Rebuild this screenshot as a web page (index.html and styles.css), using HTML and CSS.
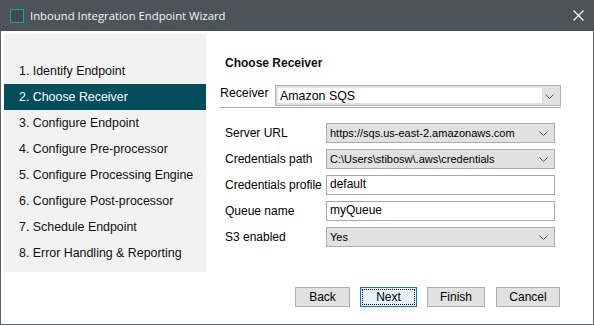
FILE: index.html
```html
<!DOCTYPE html>
<html>
<head>
<meta charset="utf-8">
<link rel="stylesheet" href="styles.css">
<title>Inbound Integration Endpoint Wizard</title>
</head>
<body>
<div class="window">
  <div class="titlebar">
    <span class="app-icon"></span>
    <span class="title">Inbound Integration Endpoint Wizard</span>
    <svg class="close" width="11" height="11" viewBox="0 0 11 11"><path d="M0.5 0.5 L10.5 10.5 M10.5 0.5 L0.5 10.5" stroke="#ffffff" stroke-width="1.2" fill="none"/></svg>
  </div>
  <div class="body">
    <ul class="steps">
      <li>1. Identify Endpoint</li>
      <li class="active">2. Choose Receiver</li>
      <li>3. Configure Endpoint</li>
      <li>4. Configure Pre-processor</li>
      <li>5. Configure Processing Engine</li>
      <li>6. Configure Post-processor</li>
      <li>7. Schedule Endpoint</li>
      <li>8. Error Handling &amp; Reporting</li>
    </ul>
    <div class="main">
      <div class="heading">Choose Receiver</div>
      <div class="receiver-row">
        <span class="receiver-label">Receiver</span>
        <div class="combo edit">
          <span class="field">Amazon SQS</span>
          <svg class="chev" width="9" height="5" viewBox="0 0 9 5"><path d="M0.5 0.5 L4.5 4.5 L8.5 0.5" stroke="#555" stroke-width="1" fill="none"/></svg>
        </div>
      </div>
      <div class="form">
        <div class="row"><span class="label">Server URL</span>
          <div class="combo"><span class="value">https://sqs.us-east-2.amazonaws.com</span>
          <svg class="chev" width="9" height="5" viewBox="0 0 9 5"><path d="M0.5 0.5 L4.5 4.5 L8.5 0.5" stroke="#555" stroke-width="1" fill="none"/></svg></div></div>
        <div class="row"><span class="label">Credentials path</span>
          <div class="combo"><span class="value">C:\Users\stibosw\.aws\credentials</span>
          <svg class="chev" width="9" height="5" viewBox="0 0 9 5"><path d="M0.5 0.5 L4.5 4.5 L8.5 0.5" stroke="#555" stroke-width="1" fill="none"/></svg></div></div>
        <div class="row"><span class="label">Credentials profile</span>
          <div class="text">default</div></div>
        <div class="row"><span class="label">Queue name</span>
          <div class="text">myQueue</div></div>
        <div class="row"><span class="label">S3 enabled</span>
          <div class="combo"><span class="value">Yes</span>
          <svg class="chev" width="9" height="5" viewBox="0 0 9 5"><path d="M0.5 0.5 L4.5 4.5 L8.5 0.5" stroke="#555" stroke-width="1" fill="none"/></svg></div></div>
      </div>
      <div class="buttons">
        <button class="btn b-back">Back</button>
        <button class="btn b-next focus"><span class="focus-ring">Next</span></button>
        <button class="btn b-finish">Finish</button>
        <button class="btn b-cancel">Cancel</button>
      </div>
    </div>
  </div>
</div>
</body>
</html>
```
FILE: styles.css
```css
* { box-sizing: border-box; }
html, body { margin: 0; padding: 0; }
body {
  width: 594px;
  height: 325px;
  overflow: hidden;
  font-family: "Liberation Sans", Arial, sans-serif;
  font-size: 12px;
  color: #000;
  background: #fff;
}
.window {
  width: 594px;
  height: 325px;
  border: 1px solid #5a6268;
  border-top: none;
  display: flex;
  flex-direction: column;
  background: #fff;
}
.titlebar {
  height: 31px;
  margin: 0 -1px;
  background: #4c545a;
  display: flex;
  align-items: center;
  padding-left: 10px;
  padding-right: 10px;
  color: #fff;
  flex-shrink: 0;
}
.app-icon {
  width: 14px;
  height: 14px;
  border: 1px solid #16a3b3;
  background: #3e4a50;
  margin-right: 6px;
}
.title {
  font-family: "Open Sans", "Noto Sans", sans-serif;
  font-size: 11.3px;
  color: #f4f6f7;
  flex: 1;
}
.close { margin-right: 0; }
.body {
  flex: 1;
  display: flex;
  align-items: flex-start;
}
.steps {
  list-style: none;
  margin: 3px 0 0 3px;
  padding: 24px 0 0 0;
  width: 202px;
  height: 238px;
  background: #f2f2f2;
}
.steps li {
  height: 26px;
  line-height: 26px;
  padding-left: 15px;
  font-size: 12.4px;
  color: #111;
  white-space: nowrap;
}
.steps li.active {
  background: #044e5b;
  color: #fff;
}
.main {
  flex: 1;
  align-self: stretch;
  display: flex;
  flex-direction: column;
  padding-left: 14px;
}
.heading {
  margin-top: 24px;
  margin-left: 5px;
  font-weight: bold;
  font-size: 12px;
  line-height: 16px;
  color: #111;
}
.receiver-row {
  margin-top: 14px;
  width: 341px;
  display: flex;
  align-items: center;
  border-bottom: 1px solid #a8a8a8;
  padding-bottom: 1px;
}
.receiver-label {
  width: 55px;
  font-size: 12.3px;
  line-height: 21px;
  height: 21px;
  position: relative;
  top: -2px;
}
.combo {
  position: relative;
  display: flex;
  align-items: center;
  background: #e1e1e1;
  border: 1px solid #adadad;
  height: 20px;
  width: 229px;
}
.combo.edit {
  width: 286px;
  height: 21px;
  padding: 2px 0 2px 2px;
}
.combo .field {
  background: #fff;
  height: 100%;
  flex: 1;
  font-size: 12.4px;
  line-height: 16px;
  padding-left: 2px;
  margin-right: 18px;
}
.combo .value {
  flex: 1;
  padding-left: 3px;
  font-size: 11px;
  white-space: nowrap;
  overflow: hidden;
}
.chev {
  position: absolute;
  right: 6px;
  top: 50%;
  margin-top: -2px;
}
.form {
  margin-top: 15px;
  display: flex;
  flex-direction: column;
  gap: 6px;
}
.row {
  display: flex;
  align-items: center;
  height: 20px;
}
.label {
  width: 106px;
  padding-left: 5px;
  font-size: 12px;
  white-space: nowrap;
}
.text {
  width: 229px;
  height: 20px;
  border: 1px solid #a8a8a8;
  background: #fff;
  font-size: 12px;
  line-height: 16px;
  padding-left: 3px;
}
.buttons {
  margin-top: auto;
  margin-bottom: 17px;
  display: flex;
  justify-content: flex-end;
  gap: 10px;
  padding-right: 33px;
}
.btn {
  height: 20px;
  border: 1px solid #adadad;
  background: #e1e1e1;
  font-family: "Liberation Sans", Arial, sans-serif;
  font-size: 12px;
  color: #000;
  padding: 0;
  margin: 0;
}
.b-back { width: 55px; }
.b-next { width: 57px; }
.b-finish { width: 58px; margin-left: 0; }
.b-cancel { width: 64px; margin-left: 1px; }
.btn.focus {
  border: 1px solid #0078d7;
  background: #e5f1fb;
  padding: 1px;
}
.focus-ring {
  display: block;
  height: 100%;
  border: 1px dotted #000;
  line-height: 14px;
}
```
